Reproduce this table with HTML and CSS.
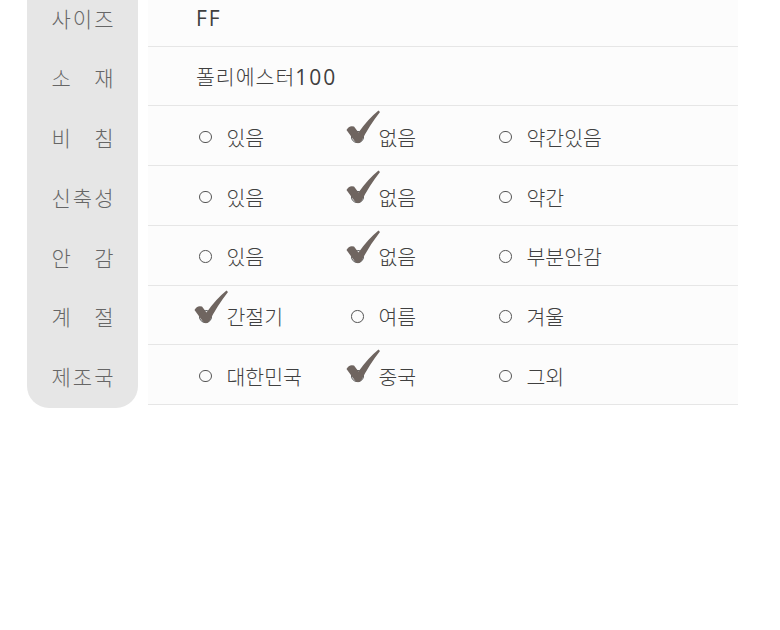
FILE: index.html
```html
<!DOCTYPE html>
<html lang="ko">
<head>
<meta charset="utf-8">
<link rel="stylesheet" href="styles.css">
</head>
<body>
<div class="spec">
  <div class="labels">
    <div class="label"><span class="lt"><span>사</span><span>이</span><span>즈</span></span></div>
    <div class="label"><span class="lt"><span>소</span><span>재</span></span></div>
    <div class="label"><span class="lt"><span>비</span><span>침</span></span></div>
    <div class="label"><span class="lt"><span>신</span><span>축</span><span>성</span></span></div>
    <div class="label"><span class="lt"><span>안</span><span>감</span></span></div>
    <div class="label"><span class="lt"><span>계</span><span>절</span></span></div>
    <div class="label"><span class="lt"><span>제</span><span>조</span><span>국</span></span></div>
  </div>
  <div class="values">
    <div class="row"><span class="plain"><span class="lat">FF</span></span></div>
    <div class="row"><span class="plain wide">폴리에스터<span class="lat">100</span></span></div>
    <div class="row">
      <span class="opt"><span class="radio"></span>있음</span>
      <span class="opt"><span class="radio on"><svg class="check" viewBox="0 0 34 36"><path d="M0.5,20 Q3,15 8,16.5 L12.5,22.5 Q22,9 32.5,0.5 L34,2 Q23,16 15.5,31 Q12,35.5 8.5,31 Z"/></svg></span>없음</span>
      <span class="opt"><span class="radio"></span>약간있음</span>
    </div>
    <div class="row">
      <span class="opt"><span class="radio"></span>있음</span>
      <span class="opt"><span class="radio on"><svg class="check" viewBox="0 0 34 36"><path d="M0.5,20 Q3,15 8,16.5 L12.5,22.5 Q22,9 32.5,0.5 L34,2 Q23,16 15.5,31 Q12,35.5 8.5,31 Z"/></svg></span>없음</span>
      <span class="opt"><span class="radio"></span>약간</span>
    </div>
    <div class="row">
      <span class="opt"><span class="radio"></span>있음</span>
      <span class="opt"><span class="radio on"><svg class="check" viewBox="0 0 34 36"><path d="M0.5,20 Q3,15 8,16.5 L12.5,22.5 Q22,9 32.5,0.5 L34,2 Q23,16 15.5,31 Q12,35.5 8.5,31 Z"/></svg></span>없음</span>
      <span class="opt"><span class="radio"></span>부분안감</span>
    </div>
    <div class="row">
      <span class="opt"><span class="radio on"><svg class="check" viewBox="0 0 34 36"><path d="M0.5,20 Q3,15 8,16.5 L12.5,22.5 Q22,9 32.5,0.5 L34,2 Q23,16 15.5,31 Q12,35.5 8.5,31 Z"/></svg></span>간절기</span>
      <span class="opt"><span class="radio"></span>여름</span>
      <span class="opt"><span class="radio"></span>겨울</span>
    </div>
    <div class="row">
      <span class="opt"><span class="radio"></span>대한민국</span>
      <span class="opt"><span class="radio on"><svg class="check" viewBox="0 0 34 36"><path d="M0.5,20 Q3,15 8,16.5 L12.5,22.5 Q22,9 32.5,0.5 L34,2 Q23,16 15.5,31 Q12,35.5 8.5,31 Z"/></svg></span>중국</span>
      <span class="opt"><span class="radio"></span>그외</span>
    </div>
  </div>
</div>
</body>
</html>
```
FILE: styles.css
```css
html, body {
  margin: 0;
  padding: 0;
  background: #ffffff;
}
body {
  font-family: "Noto Sans CJK KR", "Noto Sans", sans-serif;
  overflow: hidden;
}
.spec {
  display: flex;
  align-items: flex-start;
  gap: 10px;
  padding-left: 27px;
  margin-top: -13.25px;
}
.labels {
  width: 111px;
  background: #e6e6e6;
  border-radius: 0 0 22px 22px;
  padding-bottom: 3px;
}
.label {
  box-sizing: border-box;
  height: 59.75px;
  padding-top: 3px;
  display: flex;
  align-items: center;
  justify-content: center;
}
.lt {
  width: 62px;
  display: flex;
  justify-content: space-between;
  font-size: 21px;
  font-weight: 300;
  color: #666666;
  line-height: 1;
}
.values {
  width: 590px;
  background: #fcfcfc;
}
.row {
  box-sizing: border-box;
  height: 59.75px;
  padding-top: 3px;
  border-bottom: 1px solid #e6e6e6;
  display: flex;
  align-items: center;
  padding-left: 47px;
  font-family: "Noto Sans CJK KR", sans-serif;
  font-size: 20.5px;
  font-weight: 300;
  color: #404040;
  line-height: 1;
}
.plain {
  padding-left: 1px;
}
.wide {
  letter-spacing: 1px;
}
.lat {
  font-family: "Open Sans", "Noto Sans", sans-serif;
  font-weight: 400;
  font-size: 21px;
  letter-spacing: 2px;
}
.opt {
  display: flex;
  align-items: center;
  width: 152px;
  flex: none;
}
.opt:nth-child(2) {
  width: 148px;
}
.radio {
  position: relative;
  width: 10.5px;
  height: 10.5px;
  border: 1.3px solid #555555;
  border-radius: 50%;
  margin-left: 4px;
  margin-right: 15px;
  flex: none;
}
.check {
  position: absolute;
  left: -6.5px;
  top: -21.5px;
  width: 34px;
  height: 36px;
  fill: #6f6560;
}
```
